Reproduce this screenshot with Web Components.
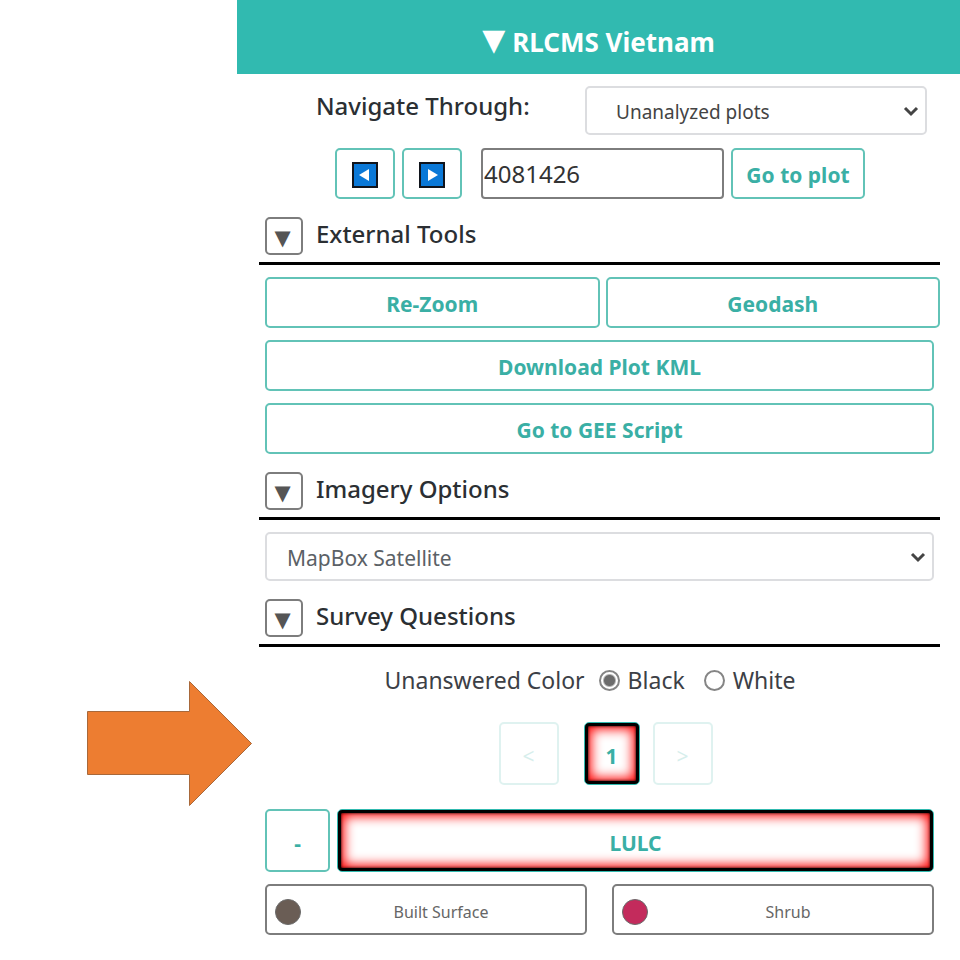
<!DOCTYPE html>
<html lang="en">
<head>
<meta charset="utf-8">
<title>RLCMS Vietnam</title>
<style>
  body { margin: 0; background: #fff; color: #333; font-family: "Noto Sans", "Open Sans", sans-serif; }
</style>
</head>
<body>
<survey-page></survey-page>

<template id="survey-page">
  <style>
    :host { display: grid; grid-template-columns: 237px minmax(0, 1fr); align-items: start; }
    main { min-width: 0; }
    .body { padding: 0 20px 24px 22px; }
    .full { margin: 0 6px; }
    .pair { display: grid; grid-template-columns: 1fr 1fr; gap: 6px; margin-left: 6px; }
    .answers { display: grid; grid-template-columns: 1fr 1fr; gap: 25px; margin: 12px 6px 0; }
    .question { display: grid; grid-template-columns: 65px 1fr; gap: 7px; margin: 24px 6px 0; }
    .pages { display: flex; justify-content: center; margin: 25px 0 0 12px; }
    .pages action-button { width: 60px; }
    .pages action-button.current { width: 56px; margin: 0 13px 0 25px; }
  </style>
  <side-pointer></side-pointer>
  <main>
    <panel-header>RLCMS Vietnam</panel-header>
    <div class="body">
      <plot-navigation></plot-navigation>
      <tool-section heading="External Tools">
        <div class="pair">
          <action-button>Re-Zoom</action-button>
          <action-button>Geodash</action-button>
        </div>
        <action-button class="full">Download Plot KML</action-button>
        <action-button class="full">Go to GEE Script</action-button>
      </tool-section>
      <tool-section heading="Imagery Options">
        <select-box class="full" label="Imagery" options="MapBox Satellite"></select-box>
      </tool-section>
      <tool-section heading="Survey Questions">
        <color-choice></color-choice>
      </tool-section>
      <div class="pages">
        <action-button size="tall" disabled label="Previous page">&lt;</action-button>
        <action-button size="tall" alert class="current">1</action-button>
        <action-button size="tall" disabled label="Next page">&gt;</action-button>
      </div>
      <div class="question">
        <action-button size="tall" label="Collapse question">-</action-button>
        <action-button size="tall" alert>LULC</action-button>
      </div>
      <div class="answers">
        <answer-button color="#6a5d55">Built Surface</answer-button>
        <answer-button color="#c32b5c">Shrub</answer-button>
      </div>
    </div>
  </main>
</template>

<template id="side-pointer">
  <style>
    :host { display: block; padding: 680px 0 0 86px; position: relative; z-index: 1; }
    svg { display: block; width: 167px; height: 127px; margin-right: -16px; max-width: none; }
  </style>
  <svg viewBox="0 0 167 127" aria-hidden="true">
    <path d="M1.500 31.500H103.500V1.500L165.500 63.500L103.500 125.500V94.500H1.500Z" fill="#ed7d31" stroke="#a8683a"/>
  </svg>
</template>

<template id="panel-header">
  <style>
    :host { display: block; background: #31bab0; color: #fff; }
    h1 { margin: 0; padding: 19px 0; display: flex; align-items: flex-start; justify-content: center; gap: 7px; font-size: 26px; font-weight: 700; line-height: 36px; padding-top: 24px; padding-bottom: 14px; }
    span { font: 30px/32px "DejaVu Sans", sans-serif; }
  </style>
  <h1><span>▼</span><slot></slot></h1>
</template>

<template id="plot-navigation">
  <style>
    :host { display: block; padding-top: 12px; }
    .filter { display: flex; justify-content: space-between; padding: 0 13px 0 57px; }
    label { font-size: 24px; font-weight: 500; line-height: 40px; color: #2b2f33; }
    select-box { width: 342px; --indent: 29px; --size: 19px; --ink: #444; }
    .plot { display: flex; gap: 7px; padding: 13px 0 0 76px; }
    .plot action-button { width: 60px; }
    .plot .go { width: 134px; }
    input { box-sizing: border-box; width: 243px; margin: 0 0 0 12px; padding: 0 0 0 1px; border: 2px solid #7d7d7d; border-radius: 4px; background: #fff; color: #333; font: 24px "Noto Sans", sans-serif; }
    svg { display: block; width: 26px; height: 26px; }
  </style>
  <div class="filter">
    <label>Navigate Through:</label>
    <select-box label="Navigate Through" options="Unanalyzed plots"></select-box>
  </div>
  <div class="plot">
    <action-button label="Previous plot"><svg viewBox="0 0 26 26"><path d="M1 1H25V25H1Z" fill="#0a78d7" stroke="#10141c" stroke-width="2"/><path d="M17 7V19L7 13Z" fill="#fff"/></svg></action-button>
    <action-button label="Next plot"><svg viewBox="0 0 26 26"><path d="M1 1H25V25H1Z" fill="#0a78d7" stroke="#10141c" stroke-width="2"/><path d="M9 7V19L19 13Z" fill="#fff"/></svg></action-button>
    <input type="text" value="4081426" aria-label="Plot number">
    <action-button class="go">Go to plot</action-button>
  </div>
</template>

<template id="tool-section">
  <style>
    :host { display: block; padding-top: 18px; }
    header { display: flex; align-items: flex-start; gap: 13px; padding: 0 6px 7px; border-bottom: 3px solid #000; }
    button { box-sizing: border-box; width: 38px; height: 38px; padding: 3px 3px 0 0; border: 2px solid #7d7d7d; border-radius: 5px; background: #fff; color: #555; font: 21px/30px "DejaVu Sans", sans-serif; }
    h2 { margin: 0; font-size: 24px; font-weight: 500; line-height: 34px; color: #2b2f33; }
    .content { display: grid; gap: 12px; padding-top: 12px; }
  </style>
  <header><button type="button">▼</button><h2></h2></header>
  <div class="content"><slot></slot></div>
</template>

<template id="action-button">
  <style>
    :host { display: block; box-sizing: border-box; }
    button { box-sizing: border-box; display: flex; align-items: center; justify-content: center; width: 100%; min-height: 51px; padding: 2px 0 0; border: 2px solid #62c3b7; border-radius: 5px; background: #fff; color: #3aafa5; font: 700 21px/30px "Noto Sans", sans-serif; }
    :host([size="tall"]) button { min-height: 63px; padding-top: 4px; }
    :host([alert]) button { border-width: 1px; border-color: #31bab0; box-shadow: inset 0 0 0 3px #000, inset 0 0 3px 3px #000, inset 0 0 12px 6px #f00; }
    button:disabled { opacity: .2; font-weight: 400; }
  </style>
  <button type="button"><slot></slot></button>
</template>

<template id="select-box">
  <style>
    :host { display: grid; box-sizing: border-box; }
    select, svg { grid-area: 1 / 1; }
    select { appearance: none; box-sizing: border-box; width: 100%; height: 49px; margin: 0; padding: 2px 40px 0 var(--indent, 20px); border: 2px solid #dcdde0; border-radius: 5px; background: #fff; color: var(--ink, #5b6166); font: var(--size, 21px) "Noto Sans", sans-serif; }
    svg { justify-self: end; align-self: center; width: 16px; height: 12px; margin-right: 8px; pointer-events: none; }
  </style>
  <select></select>
  <svg viewBox="0 0 16 12" aria-hidden="true"><path d="M2 3L8 9L14 3" fill="none" stroke="#444" stroke-width="3"/></svg>
</template>

<template id="color-choice">
  <style>
    :host { display: flex; justify-content: center; align-items: center; padding: 4px 19px 0 0; font-size: 23px; line-height: 34px; color: #3c4046; }
    label { display: flex; align-items: center; gap: 8px; margin-left: 14px; }
    label + label { margin-left: 19px; }
    input { appearance: none; box-sizing: border-box; width: 21px; height: 21px; margin: 0; border: 2px solid #858585; border-radius: 50%; background: #fff; }
    input:checked { background: radial-gradient(circle, #6c6c6c 5px, #fff 7px); }
  </style>
  <span>Unanswered Color</span>
  <label><input type="radio" name="color" checked>Black</label>
  <label><input type="radio" name="color">White</label>
</template>

<template id="answer-button">
  <style>
    :host { display: block; }
    button { box-sizing: border-box; display: flex; align-items: center; width: 100%; min-height: 51px; padding: 5px 4px 0 8px; border: 2px solid #7d7d7d; border-radius: 5px; background: #fff; color: #666; font: 16px/24px "Noto Sans", sans-serif; }
    i { box-sizing: border-box; width: 26px; height: 26px; border: 1px solid #6a6a6a; border-radius: 50%; }
    span { flex: 1; }
  </style>
  <button type="button"><i></i><span><slot></slot></span></button>
</template>

<script>
  const define = (name, setup) => customElements.define(name, class extends HTMLElement {
    connectedCallback() {
      if (this.shadowRoot) return;
      const root = this.attachShadow({ mode: 'open' });
      root.append(document.getElementById(name).content.cloneNode(true));
      if (setup) setup(this, root);
    }
  });

  define('side-pointer');
  define('panel-header');
  define('action-button', (host, root) => {
    const button = root.querySelector('button');
    button.disabled = host.hasAttribute('disabled');
    if (host.hasAttribute('label')) button.setAttribute('aria-label', host.getAttribute('label'));
  });
  define('select-box', (host, root) => {
    const select = root.querySelector('select');
    select.setAttribute('aria-label', host.getAttribute('label'));
    for (const text of host.getAttribute('options').split('|')) select.add(new Option(text));
  });
  define('plot-navigation', (host, root) => {
    root.querySelector('label').addEventListener('click', () =>
      root.querySelector('select-box').shadowRoot.querySelector('select').focus());
  });
  define('tool-section', (host, root) => {
    const heading = host.getAttribute('heading');
    const button = root.querySelector('button');
    root.querySelector('h2').textContent = heading;
    button.setAttribute('aria-label', 'Toggle ' + heading);
    button.addEventListener('click', () => {
      const content = root.querySelector('.content');
      content.style.display = content.style.display ? '' : 'none';
    });
  });
  define('color-choice');
  define('answer-button', (host, root) => {
    root.querySelector('i').style.background = host.getAttribute('color');
  });
  define('survey-page');
</script>
</body>
</html>
